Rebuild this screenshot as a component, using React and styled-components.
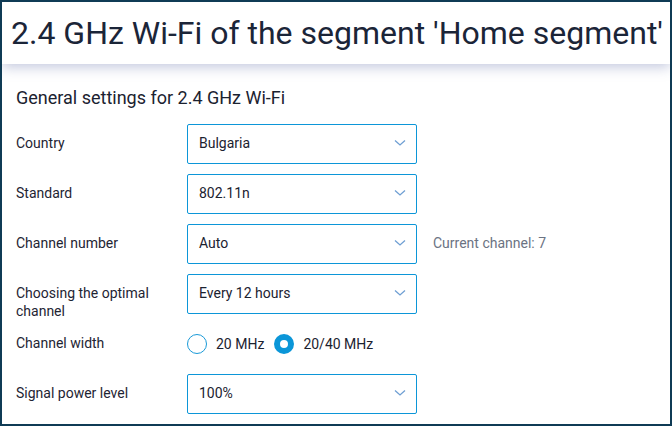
import React from "react";
import styled, { createGlobalStyle } from "styled-components";

const Global = createGlobalStyle`
  html, body { margin: 0; padding: 0; background: #fff; }
  body { font-family: Roboto, "Liberation Sans", sans-serif; }
  * { box-sizing: border-box; }
`;

const Frame = styled.div`
  width: 672px;
  height: 426px;
  border: 2px solid #0f3b55;
  overflow: hidden;
  background: #fff;
  display: flex;
  flex-direction: column;
`;

const Header = styled.header`
  height: 62px;
  flex: none;
  display: flex;
  align-items: center;
  padding-left: 9px;
  background: #fff;
  box-shadow: 0 3px 12px rgba(120, 130, 180, 0.45);
  position: relative;
  z-index: 1;
`;

const Title = styled.h1`
  margin: 0;
  font-size: 32px;
  font-weight: 400;
  color: #1b2538;
  white-space: nowrap;
`;

const Content = styled.main`
  padding: 23px 14px 0 14px;
  display: flex;
  flex-direction: column;
`;

const SectionTitle = styled.h2`
  margin: 0 0 16px 0;
  font-size: 18px;
  line-height: 21px;
  font-weight: 400;
  color: #1b2230;
`;

const Rows = styled.div`
  display: flex;
  flex-direction: column;
  gap: 10px;
`;

const Row = styled.div`
  display: flex;
  align-items: flex-start;
  height: 40px;
`;

const Label = styled.div`
  width: 171px;
  flex: none;
  padding: 10px 16px 0 0;
  font-size: 14px;
  line-height: 18px;
  color: #1e2433;
`;

const SelectBox = styled.div`
  width: 230px;
  height: 40px;
  border: 1px solid #0c96d8;
  border-radius: 2px;
  display: flex;
  align-items: center;
  justify-content: space-between;
  padding: 0 10px 2px 11px;
  font-size: 14px;
  color: #1b2230;
`;

const Hint = styled.div`
  margin-left: 16px;
  height: 40px;
  padding-bottom: 2px;
  display: flex;
  align-items: center;
  font-size: 14px;
  color: #6b7383;
`;

const RadioGroup = styled.div`
  height: 40px;
  display: flex;
  align-items: center;
`;

const RadioItem = styled.label`
  display: flex;
  align-items: center;
  gap: 9px;
  margin-right: 10px;
  font-size: 14px;
  color: #1b2230;
`;

const RadioCircle = styled.span`
  width: 20px;
  height: 20px;
  border-radius: 50%;
  border: ${p => (p.$checked ? "6px solid #0b96d8" : "1px solid #1a9ad8")};
  background: #fff;
  flex: none;
`;

const Chevron = () => (
  <svg width="12" height="8" viewBox="0 0 12 8" fill="none">
    <path d="M1 1.5 L6 6 L11 1.5" stroke="#6f9fd3" strokeWidth="1.3" />
  </svg>
);

const Select = ({ value }) => (
  <SelectBox>
    <span>{value}</span>
    <Chevron />
  </SelectBox>
);

export default function App() {
  return (
    <>
      <Global />
      <Frame>
        <Header>
          <Title>2.4 GHz Wi-Fi of the segment 'Home segment'</Title>
        </Header>
        <Content>
          <SectionTitle>General settings for 2.4 GHz Wi-Fi</SectionTitle>
          <Rows>
            <Row>
              <Label>Country</Label>
              <Select value="Bulgaria" />
            </Row>
            <Row>
              <Label>Standard</Label>
              <Select value="802.11n" />
            </Row>
            <Row>
              <Label>Channel number</Label>
              <Select value="Auto" />
              <Hint>Current channel: 7</Hint>
            </Row>
            <Row>
              <Label>Choosing the optimal channel</Label>
              <Select value="Every 12 hours" />
            </Row>
            <Row>
              <Label>Channel width</Label>
              <RadioGroup>
                <RadioItem>
                  <RadioCircle />
                  20 MHz
                </RadioItem>
                <RadioItem>
                  <RadioCircle $checked />
                  20/40 MHz
                </RadioItem>
              </RadioGroup>
            </Row>
            <Row>
              <Label>Signal power level</Label>
              <Select value="100%" />
            </Row>
          </Rows>
        </Content>
      </Frame>
    </>
  );
}
